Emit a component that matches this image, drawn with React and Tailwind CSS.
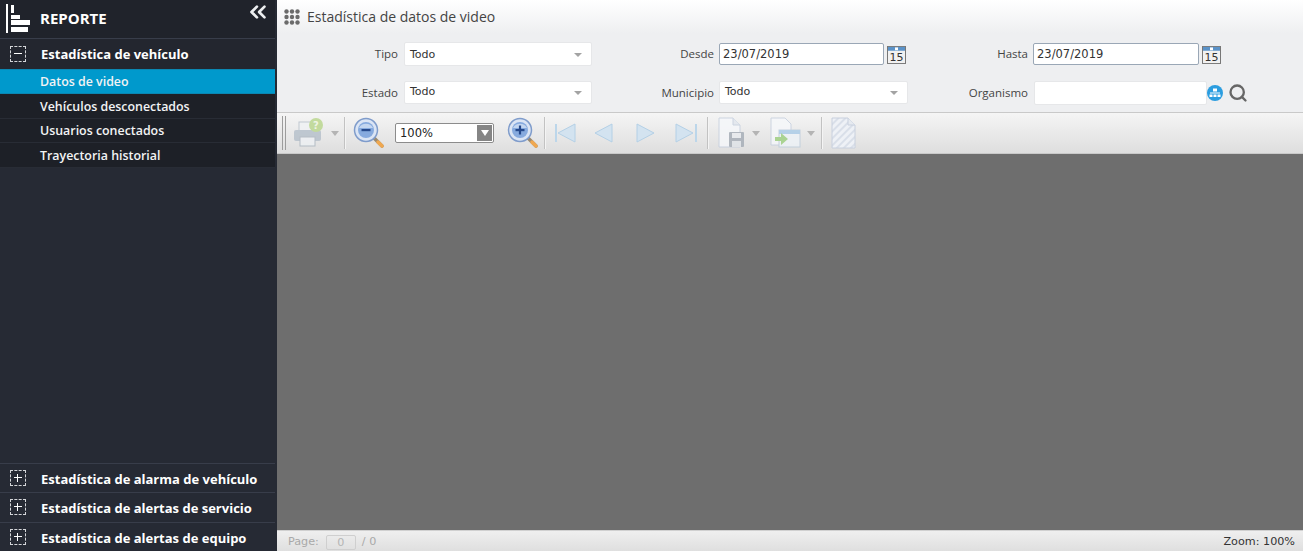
import { ChevronsLeft, Search } from 'lucide-react'

const subItems = ['Datos de video', 'Vehículos desconectados', 'Usuarios conectados', 'Trayectoria historial']
const bottomGroups = ['Estadística de alarma de vehículo', 'Estadística de alertas de servicio', 'Estadística de alertas de equipo']

const sans = "font-['Open_Sans','Noto_Sans',sans-serif]"
const tahoma = "font-['DejaVu_Sans',sans-serif]"

function ToggleBox({ open }) {
  return (
    <span className="relative block w-4 h-4 border border-dashed border-[#d5d7da] shrink-0">
      <span className="absolute left-[3px] top-[6px] w-2 h-px bg-white" />
      {!open && <span className="absolute left-[6px] top-[3px] w-px h-2 bg-white" />}
    </span>
  )
}

function GroupRow({ label, open, height, textPad = 'pt-[2px]' }) {
  return (
    <div className={`flex items-center pl-[10px] border-t border-[#383d4a] ${height}`}>
      <ToggleBox open={open} />
      <span className={`ml-[15px] ${textPad} text-[13px] font-bold text-white ${sans}`}>{label}</span>
    </div>
  )
}

function Sidebar() {
  return (
    <aside className="w-[277px] shrink-0 bg-[#262a34] flex flex-col pr-[2px]">
      <div className="h-[38px] flex items-center pl-[6px] pr-[6px] bg-[#20232b]">
        <svg width="24" height="30" viewBox="0 0 24 30" className="shrink-0">
          <rect x="0" y="0" width="2" height="29" fill="#fff" />
          <rect x="5" y="1" width="3" height="8" fill="#fff" />
          <rect x="5" y="11" width="9" height="4" fill="#fff" />
          <rect x="5" y="16" width="19" height="5" fill="#fff" />
          <rect x="5" y="23" width="17" height="5" fill="#fff" />
        </svg>
        <span className={`ml-[10px] -mt-[2px] text-[15px] font-bold text-white ${sans}`}>REPORTE</span>
        <ChevronsLeft className="ml-auto -mt-[14px] -mr-[2px] text-[#eceef0]" size={26} strokeWidth={2.5} />
      </div>
      <GroupRow label="Estadística de vehículo" open height="h-[31px] bg-[#23262f]" />
      <div className="flex flex-col bg-[#1d2027]">
        {subItems.map((item, i) => (
          <div
            key={item}
            className={`pl-[40px] flex items-center text-[12.4px] font-semibold text-[#f2f3f4] ${sans} ${
              i === 0 ? 'h-[25px] pt-[2px] bg-[#0099cc] border-y border-[#0b87b2]' : 'h-[24.5px] pt-[3px] border-b border-[#282c35]'
            }`}
          >
            {item}
          </div>
        ))}
      </div>
      <div className="flex-1" />
      {bottomGroups.map(group => (
        <GroupRow key={group} label={group} height="h-[29.5px]" textPad="pt-[3px]" />
      ))}
    </aside>
  )
}

function SelectBox({ width, box }) {
  return (
    <div className={`${width} ${box} bg-white rounded-[2px] border border-[#e6e7e9] flex items-center pl-[5px] pr-[9px] ${tahoma} text-[11px] text-[#333]`}>
      <span>Todo</span>
      <span className="ml-auto w-0 h-0 border-x-[4px] border-x-transparent border-t-[4px] border-t-[#a3a3a3]" />
    </div>
  )
}

function DateBox({ width }) {
  return (
    <div className={`${width} h-[22px] bg-white border border-[#9aa7b6] rounded-[2px] flex items-center pl-[3px] pt-[1px] ${tahoma} text-[11.5px] text-[#333]`}>
      23/07/2019
    </div>
  )
}

function CalendarIcon() {
  return (
    <svg width="19" height="18" viewBox="0 0 19 19" preserveAspectRatio="none" className="shrink-0 mt-[1px]">
      <rect x="0.5" y="0.5" width="18" height="18" fill="#f1f1f1" stroke="#777" />
      <rect x="1" y="1" width="17" height="4" fill="#5b92c8" />
      <rect x="8" y="1.5" width="3" height="3" fill="#fff" />
      <text x="9.5" y="16" textAnchor="middle" fontSize="11" fill="#333" fontFamily="DejaVu Sans">15</text>
    </svg>
  )
}

function Label({ width, children }) {
  return <span className={`${width} text-right text-[11.5px] text-[#444] ${sans}`}>{children}</span>
}

function FilterForm() {
  return (
    <div className="h-[79px] bg-[#eeeff1] flex flex-col">
      <div className="flex items-center mt-[9px] h-[24px]">
        <Label width="w-[121px]">Tipo</Label>
        <div className="ml-[6px]"><SelectBox width="w-[188px]" box="h-[24px] pt-[2px]" /></div>
        <Label width="w-[122px]">Desde</Label>
        <div className="ml-[5px] flex"><DateBox width="w-[165px]" /></div>
        <div className="ml-[3px] flex"><CalendarIcon /></div>
        <Label width="w-[122px]">Hasta</Label>
        <div className="ml-[5px] flex"><DateBox width="w-[166px]" /></div>
        <div className="ml-[3px] flex"><CalendarIcon /></div>
      </div>
      <div className="flex items-center mt-[15px] h-[24px]">
        <Label width="w-[121px]">Estado</Label>
        <div className="ml-[6px] self-start"><SelectBox width="w-[188px]" box="h-[23px]" /></div>
        <Label width="w-[122px]">Municipio</Label>
        <div className="ml-[5px] self-start"><SelectBox width="w-[189px]" box="h-[23px]" /></div>
        <Label width="w-[120px]">Organismo</Label>
        <div className="ml-[6px] w-[173px] h-[24px] bg-white border border-[#e6e7e9] rounded-[2px]" />
        <svg width="16" height="16" viewBox="0 0 16 16" className="shrink-0">
          <circle cx="8" cy="8" r="8" fill="#2b9de0" />
          <rect x="6" y="3.5" width="4" height="3" fill="#fff" />
          <rect x="3" y="7.5" width="10" height="1" fill="#fff" />
          <rect x="2.5" y="9.5" width="3" height="2.5" fill="#fff" />
          <rect x="6.5" y="9.5" width="3" height="2.5" fill="#fff" />
          <rect x="10.5" y="9.5" width="3" height="2.5" fill="#fff" />
        </svg>
        <Search className="ml-[5px] text-[#666]" size={20} strokeWidth={2.8} />
      </div>
    </div>
  )
}

function Divider({ className }) {
  return <span className={`block w-[2px] h-[32px] bg-[#c2c2c2] border-r border-[#f4f4f4] shrink-0 ${className}`} />
}

function Caret({ className }) {
  return <span className={`block w-0 h-0 border-x-[4px] border-x-transparent border-t-[5px] border-t-[#b4b4b4] shrink-0 ${className}`} />
}

function Magnifier({ plus, className }) {
  return (
    <svg width="32" height="32" viewBox="0 0 32 32" className={`shrink-0 ${className}`}>
      <line x1="21" y1="21" x2="29" y2="29" stroke="#9a8a70" strokeWidth="3.5" strokeLinecap="round" />
      <line x1="25" y1="25" x2="29" y2="29" stroke="#f0a850" strokeWidth="3.5" strokeLinecap="round" />
      <circle cx="13" cy="13" r="11.5" fill="#dbe5f4" stroke="#7f9ccb" strokeWidth="1.5" />
      <circle cx="13" cy="13" r="8" fill="#86aade" />
      <path d="M6 11 a8 8 0 0 1 14 0 Z" fill="#c3d6f0" />
      <rect x="8.5" y="12" width="9" height="2.2" fill="#264a8c" />
      {plus && <rect x="11.9" y="8.5" width="2.2" height="9" fill="#264a8c" />}
    </svg>
  )
}

function NavArrow({ dir, bar, className }) {
  const pts = dir === 'left' ? '20,2 20,20 3,11' : '3,2 3,20 20,11'
  return (
    <svg width="24" height="22" viewBox="0 0 24 22" className={`shrink-0 ${className}`}>
      {bar === 'left' && <rect x="0" y="2" width="2" height="18" fill="#bcd6ea" />}
      <polygon points={pts} fill="#d3e3f0" stroke="#b4d0e6" strokeWidth="1" />
      {bar === 'right' && <rect x="22" y="2" width="2" height="18" fill="#bcd6ea" />}
    </svg>
  )
}

function Toolbar() {
  return (
    <div className="h-[42px] flex items-center border-y border-[#c9c9c9] bg-gradient-to-b from-[#f5f5f5] to-[#dedede] pl-[5px]">
      <span className="block w-[4px] h-[34px] border-x border-[#9c9c9c] shrink-0" />
      <svg width="32" height="30" viewBox="0 0 32 30" className="ml-[7px] shrink-0 opacity-80">
        <rect x="6" y="4" width="16" height="10" fill="#f0f2f5" stroke="#b5bfca" />
        <rect x="1" y="12" width="27" height="11" rx="2" fill="#b4bfca" />
        <rect x="7" y="19" width="15" height="9" fill="#eef1f4" stroke="#a9b3be" />
        <circle cx="23" cy="7" r="7" fill="#b8d68a" />
        <text x="23" y="10.5" textAnchor="middle" fontSize="10" fontWeight="bold" fill="#eef5e0" fontFamily="DejaVu Sans">?</text>
      </svg>
      <Caret className="ml-[6px]" />
      <Divider className="ml-[5px]" />
      <Magnifier className="ml-[7px]" />
      <div className="ml-[10px] w-[99px] h-[20px] bg-white border border-[#8c8c8c] rounded-[2px] flex items-center pl-[4px] pr-px">
        <span className={`${tahoma} pt-[1px] text-[11.5px] text-[#222]`}>100%</span>
        <span className="ml-auto w-[15px] h-[16px] bg-[#858585] flex items-center justify-center">
          <span className="block w-0 h-0 border-x-[4px] border-x-transparent border-t-[6px] border-t-white" />
        </span>
      </div>
      <Magnifier plus className="ml-[13px]" />
      <Divider className="ml-[5px]" />
      <NavArrow dir="left" bar="left" className="ml-[9px]" />
      <NavArrow dir="left" className="ml-[13px]" />
      <NavArrow dir="right" className="ml-[18px]" />
      <NavArrow dir="right" bar="right" className="ml-[15px]" />
      <Divider className="ml-[10px]" />
      <svg width="30" height="32" viewBox="0 0 30 32" className="ml-[9px] shrink-0 opacity-80">
        <path d="M1 1 H15 L22 8 V30 H1 Z" fill="#f6f8fb" stroke="#c4cede" />
        <path d="M15 1 V8 H22" fill="#e2e7ee" stroke="#c4cede" />
        <rect x="11" y="15" width="15" height="15" rx="1" fill="#a3abb5" />
        <rect x="14" y="16" width="9" height="5" fill="#e8ebef" />
        <rect x="14" y="24" width="9" height="6" fill="#dfe3e8" />
      </svg>
      <Caret className="ml-[4px]" />
      <svg width="32" height="32" viewBox="0 0 32 32" className="ml-[10px] shrink-0 opacity-80">
        <path d="M1 1 H15 L21 7 V28 H1 Z" fill="#f6f8fb" stroke="#c4cede" />
        <rect x="9" y="13" width="21" height="17" fill="#eef3f8" stroke="#bccbdb" />
        <rect x="9" y="13" width="21" height="4" fill="#a9cbe8" />
        <path d="M5 20 H11 V16 L18 22 L11 28 V24 H5 Z" fill="#9ccf7e" />
      </svg>
      <Caret className="ml-[5px]" />
      <Divider className="ml-[6px]" />
      <svg width="26" height="32" viewBox="0 0 26 32" className="ml-[8px] shrink-0">
        <defs>
          <pattern id="hatch" width="5" height="5" patternUnits="userSpaceOnUse" patternTransform="rotate(45)">
            <rect width="5" height="5" fill="#eef1f6" />
            <rect width="2" height="5" fill="#d9dfe9" />
          </pattern>
        </defs>
        <path d="M1 1 H17 L24 8 V31 H1 Z" fill="url(#hatch)" stroke="#c8d0de" />
        <path d="M17 1 V8 H24" fill="#e6eaf0" stroke="#c8d0de" />
      </svg>
    </div>
  )
}

function StatusBar() {
  return (
    <div className={`h-[21px] flex items-center bg-gradient-to-b from-[#efefef] to-[#dfdfdf] border-t border-[#d0d0d0] pl-[11px] pr-[8px] pt-[2px] ${tahoma} text-[11.2px]`}>
      <span className="text-[#a9a9a9]">Page:</span>
      <span className="ml-[7px] w-[30px] h-[15px] border border-[#cfcfcf] rounded-[2px] text-center leading-[13px] text-[#b5b5b5]">0</span>
      <span className="ml-[6px] text-[#a9a9a9]">/ 0</span>
      <span className="ml-auto text-[#333]">Zoom: 100%</span>
    </div>
  )
}

export default function App() {
  return (
    <div className="flex h-[551px] w-[1303px] overflow-hidden">
      <Sidebar />
      <main className="flex-1 min-w-0 flex flex-col">
        <div className="h-[33px] flex items-center pl-[7px] bg-gradient-to-b from-white to-[#eeeff1]">
          <svg width="16" height="16" viewBox="0 0 16 16" fill="#6b6b6b" className="shrink-0">
            {[2.5, 8, 13.5].flatMap(y =>
              [2.5, 8, 13.5].map(x => <circle key={`${x}-${y}`} cx={x} cy={y} r="2.2" />)
            )}
          </svg>
          <span className={`ml-[7px] text-[14px] text-[#444] ${sans}`}>Estadística de datos de video</span>
        </div>
        <FilterForm />
        <Toolbar />
        <div className="flex-1 bg-[#6e6e6e]" />
        <StatusBar />
      </main>
    </div>
  )
}
